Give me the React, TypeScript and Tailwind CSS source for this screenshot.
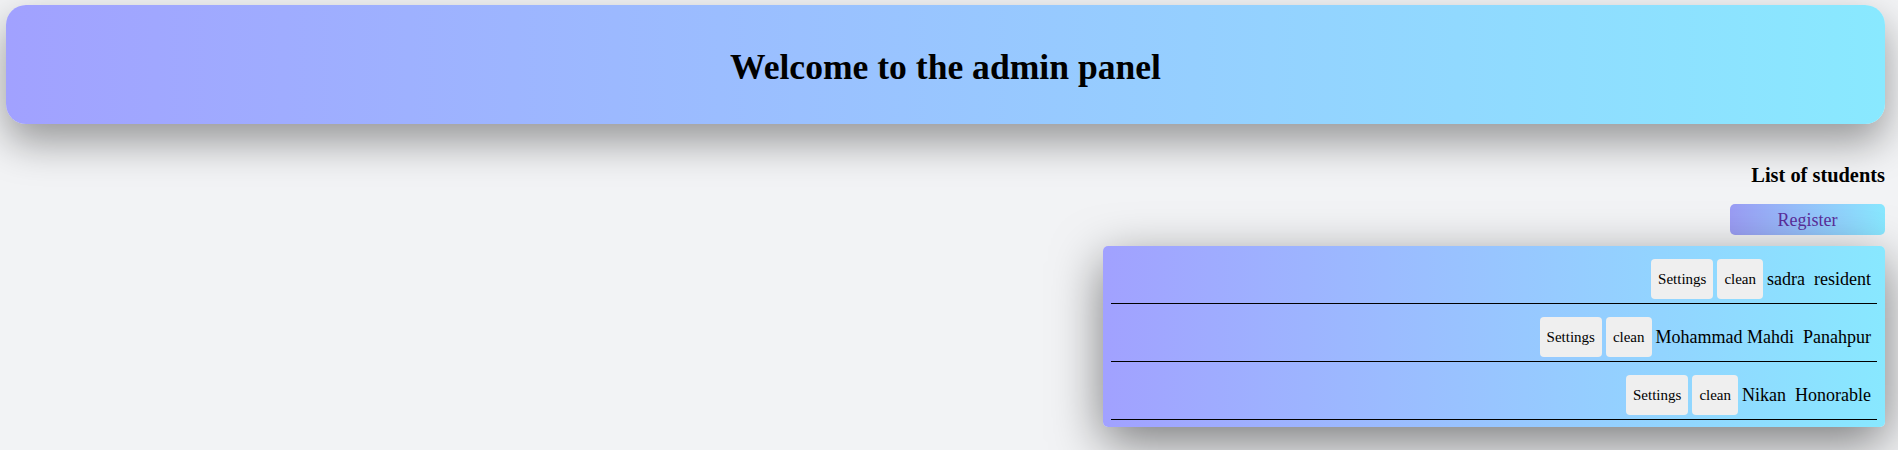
const students = [
  { first: "sadra", last: "resident" },
  { first: "Mohammad Mahdi", last: "Panahpur" },
  { first: "Nikan", last: "Honorable" },
];

const StudentRow = ({ first, last }: { first: string; last: string }) => {
  return (
    <div className="mx-2 flex items-center justify-end gap-[4px] border-b border-black pt-[13px] pb-[4px] pr-[6px]">
      <button className="h-10 rounded-[4px] bg-[#efefef] px-[7px] text-[15px] text-black">
        Settings
      </button>
      <button className="h-10 rounded-[4px] bg-[#efefef] px-[7px] text-[15px] text-black">
        clean
      </button>
      <span className="text-[18px] text-black">{first}</span>
      <span className="ml-[5px] text-[18px] text-black">{last}</span>
    </div>
  );
};

const App = () => {
  return (
    <div
      className="min-h-screen bg-[#f2f3f5] pt-[5px] pl-[6px] pr-[13px]"
      style={{ fontFamily: '"Liberation Serif", "Times New Roman", serif' }}
    >
      <header className="flex h-[119px] items-center justify-center rounded-[20px] bg-linear-to-r from-[#a1a1ff] to-[#89e9ff] shadow-[0_18px_40px_rgba(0,0,0,0.38)]">
        <h1 className="pt-1 text-[35.6px] leading-[40px] font-bold text-black">Welcome to the admin panel</h1>
      </header>

      <div className="flex flex-col items-end">
        <h3 className="mt-10 text-[20.4px] leading-[22px] font-bold text-black">List of students</h3>
        <button className="mt-[18px] h-[31px] w-[155px] rounded-[5px] bg-linear-to-r from-[#9a9cf4] to-[#88e8ff] text-[18px] leading-[22px] text-[#5b2e9b]">
          Register
        </button>

        <div className="mt-[11px] w-[782px] rounded-[5px] bg-linear-to-r from-[#a1a1ff] to-[#88e8ff] pb-[7px] shadow-[0_15px_50px_rgba(0,0,0,0.5)]">
          {students.map((s) => (
            <StudentRow key={s.first} first={s.first} last={s.last} />
          ))}
        </div>
      </div>
    </div>
  );
};

export default App;
